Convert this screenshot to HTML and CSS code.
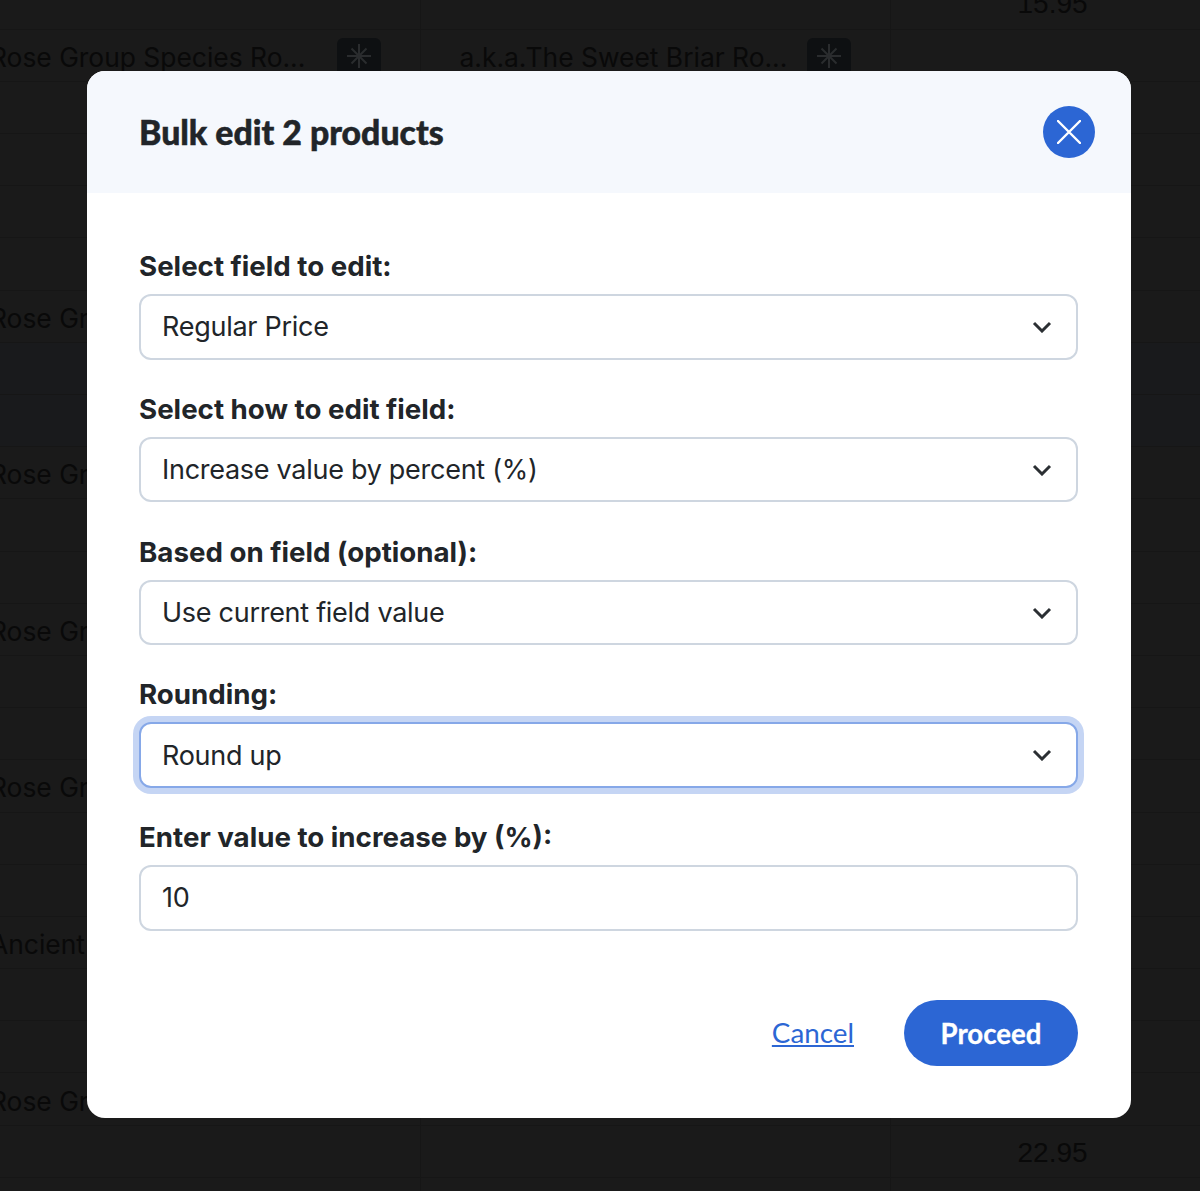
FILE: index.html
```html
<!DOCTYPE html>
<html>
<head>
    <title>Bulk edit</title>
    <link rel="stylesheet" href="styles.css">
</head>
<body>
<table class="products">
    <tr><td></td><td></td><td class="price">15.95</td></tr>
    <tr>
        <td><div class="cell"><span class="name">Rose Group Species Ro...</span><span class="badge"><svg viewBox="0 0 44 44" width="44" height="44"><path d="M22 6V30M10 18H34M14.5 10.5L29.5 25.5M29.5 10.5L14.5 25.5"/></svg></span></div></td>
        <td><div class="cell"><span class="name">a.k.a.The Sweet Briar Ro...</span><span class="badge"><svg viewBox="0 0 44 44" width="44" height="44"><path d="M22 6V30M10 18H34M14.5 10.5L29.5 25.5M29.5 10.5L14.5 25.5"/></svg></span></div></td>
        <td></td>
    </tr>
    <tr><td></td><td></td><td></td></tr>
    <tr><td></td><td></td><td></td></tr>
    <tr><td></td><td></td><td></td></tr>
    <tr><td></td><td></td><td></td></tr>
    <tr><td><div class="cell"><span class="name">Rose Group</span></div></td><td></td><td></td></tr>
    <tr class="picked"><td></td><td></td><td></td></tr>
    <tr class="picked"><td></td><td></td><td></td></tr>
    <tr><td><div class="cell"><span class="name">Rose Group</span></div></td><td></td><td></td></tr>
    <tr><td></td><td></td><td></td></tr>
    <tr><td></td><td></td><td></td></tr>
    <tr><td><div class="cell"><span class="name">Rose Group</span></div></td><td></td><td></td></tr>
    <tr><td></td><td></td><td></td></tr>
    <tr><td></td><td></td><td></td></tr>
    <tr><td><div class="cell"><span class="name">Rose Group</span></div></td><td></td><td></td></tr>
    <tr><td></td><td></td><td></td></tr>
    <tr><td></td><td></td><td></td></tr>
    <tr><td><div class="cell"><span class="name">Ancient</span></div></td><td></td><td></td></tr>
    <tr><td></td><td></td><td></td></tr>
    <tr><td></td><td></td><td></td></tr>
    <tr><td><div class="cell"><span class="name">Rose Group</span></div></td><td></td><td></td></tr>
    <tr><td></td><td></td><td class="price">22.95</td></tr>
    <tr><td></td><td></td><td></td></tr>
</table>

<div class="modal">
    <div class="modal-header">
        <h2>Bulk edit 2 products</h2>
        <button class="close-btn" type="button">
            <svg viewBox="0 0 24 24" width="24" height="24"><path d="M1 1L23 23M23 1L1 23"/></svg>
        </button>
    </div>
    <div class="modal-body">
        <div class="field">
            <label>Select field to edit:</label>
            <div class="select-box">
                <select><option>Regular Price</option></select>
                <svg class="chevron" viewBox="0 0 20 12" width="20" height="12"><path d="M2 2L10 10L18 2"/></svg>
            </div>
        </div>
        <div class="field">
            <label>Select how to edit field:</label>
            <div class="select-box">
                <select><option>Increase value by percent (%)</option></select>
                <svg class="chevron" viewBox="0 0 20 12" width="20" height="12"><path d="M2 2L10 10L18 2"/></svg>
            </div>
        </div>
        <div class="field">
            <label>Based on field (optional):</label>
            <div class="select-box">
                <select><option>Use current field value</option></select>
                <svg class="chevron" viewBox="0 0 20 12" width="20" height="12"><path d="M2 2L10 10L18 2"/></svg>
            </div>
        </div>
        <div class="field">
            <label>Rounding:</label>
            <div class="select-box">
                <select class="focused"><option>Round up</option></select>
                <svg class="chevron" viewBox="0 0 20 12" width="20" height="12"><path d="M2 2L10 10L18 2"/></svg>
            </div>
        </div>
        <div class="field">
            <label>Enter value to increase by (%):</label>
            <input type="text" value="10">
        </div>
    </div>
    <div class="modal-footer">
        <a href="#" class="cancel">Cancel</a>
        <button class="proceed" type="button">Proceed</button>
    </div>
</div>
</body>
</html>
```

FILE: styles.css
```css
html, body {
    height: 100%;
}

body {
    margin: 0;
    background-color: #1a1a1a;
    overflow: hidden;
    font-family: Inter, "Liberation Sans", sans-serif;
}

.products {
    width: 1200px;
    margin-top: -23px;
    border-collapse: collapse;
    table-layout: fixed;
    color: #090909;
    font-size: 26.4px;
}

.products td {
    height: 52.2px;
    padding: 0;
    box-sizing: border-box;
    border-bottom: 1px solid #161616;
}

.products td:first-child {
    width: 420px;
    border-right: 1px solid #161616;
}

.products td:nth-child(2) {
    width: 470px;
    border-right: 1px solid #161616;
}

.products tr.picked td {
    background-color: #191a1c;
}

.products .price {
    padding: 3px 0 0 127px;
    font-family: "Liberation Sans", sans-serif;
    font-size: 28px;
}

.cell {
    display: flex;
    align-items: center;
    justify-content: space-between;
    height: 51px;
    margin-left: -10px;
    padding-right: 39px;
    white-space: nowrap;
}

.products td:nth-child(2) .cell {
    margin-left: 39px;
}

.name {
    padding-top: 3px;
}

.badge {
    display: flex;
    align-self: flex-start;
    width: 44px;
    height: 40px;
    margin-top: 8px;
    background-color: #0e1012;
    border-radius: 6px;
}

.badge path {
    fill: none;
    stroke: #2a2c2e;
    stroke-width: 2;
}

.modal {
    position: absolute;
    top: 71px;
    left: 87px;
    width: 1044px;
    height: 1047px;
    background-color: white;
    border-radius: 18px;
    overflow: hidden;
    color: #212529;
}

.modal-header {
    display: flex;
    align-items: center;
    justify-content: space-between;
    height: 122px;
    padding: 0 36px 0 52px;
    background-color: #f5f8fd;
}

.modal-header h2 {
    margin: 0;
    font-family: Lato, sans-serif;
    font-size: 33.8px;
    font-weight: 900;
    -webkit-text-stroke: 0.5px #212529;
}

.close-btn {
    display: flex;
    align-items: center;
    justify-content: center;
    width: 52px;
    height: 52px;
    padding: 0;
    border: none;
    border-radius: 50%;
    background-color: #2c66d4;
}

.close-btn path {
    fill: none;
    stroke: white;
    stroke-width: 2.4;
    stroke-linecap: round;
}

.modal-body {
    display: flex;
    flex-direction: column;
    gap: 32.25px;
    padding: 56px 53px 0 52px;
}

.field label {
    display: block;
    height: 45px;
    line-height: 34px;
    font-size: 27.7px;
    font-weight: 700;
}

.select-box {
    position: relative;
}

.field select,
.field input {
    display: block;
    width: 100%;
    height: 65.5px;
    box-sizing: border-box;
    padding: 0 21px;
    border: 2px solid #ced6e0;
    border-radius: 12px;
    background-color: white;
    color: #212529;
    font-family: Inter, "Liberation Sans", sans-serif;
    font-size: 27px;
    letter-spacing: -0.28px;
    appearance: none;
    outline: none;
}

.field select.focused {
    border-color: #86a8e8;
    box-shadow: 0 0 0 6px #c5d5f4;
}

.chevron {
    position: absolute;
    top: 27px;
    right: 26px;
}

.chevron path {
    fill: none;
    stroke: #2b2f33;
    stroke-width: 3;
}

.modal-footer {
    display: flex;
    align-items: center;
    justify-content: flex-end;
    gap: 50px;
    padding: 69.5px 53px 0 0;
}

.cancel {
    position: relative;
    top: -1px;
    color: #2c66d4;
    font-family: Lato, sans-serif;
    font-size: 27.8px;
}

.proceed {
    width: 174px;
    height: 66px;
    border: none;
    border-radius: 33px;
    background-color: #2c66d4;
    color: white;
    font-family: Lato, sans-serif;
    font-size: 27.6px;
    font-weight: 700;
    -webkit-text-stroke: 0.3px white;
}
```
